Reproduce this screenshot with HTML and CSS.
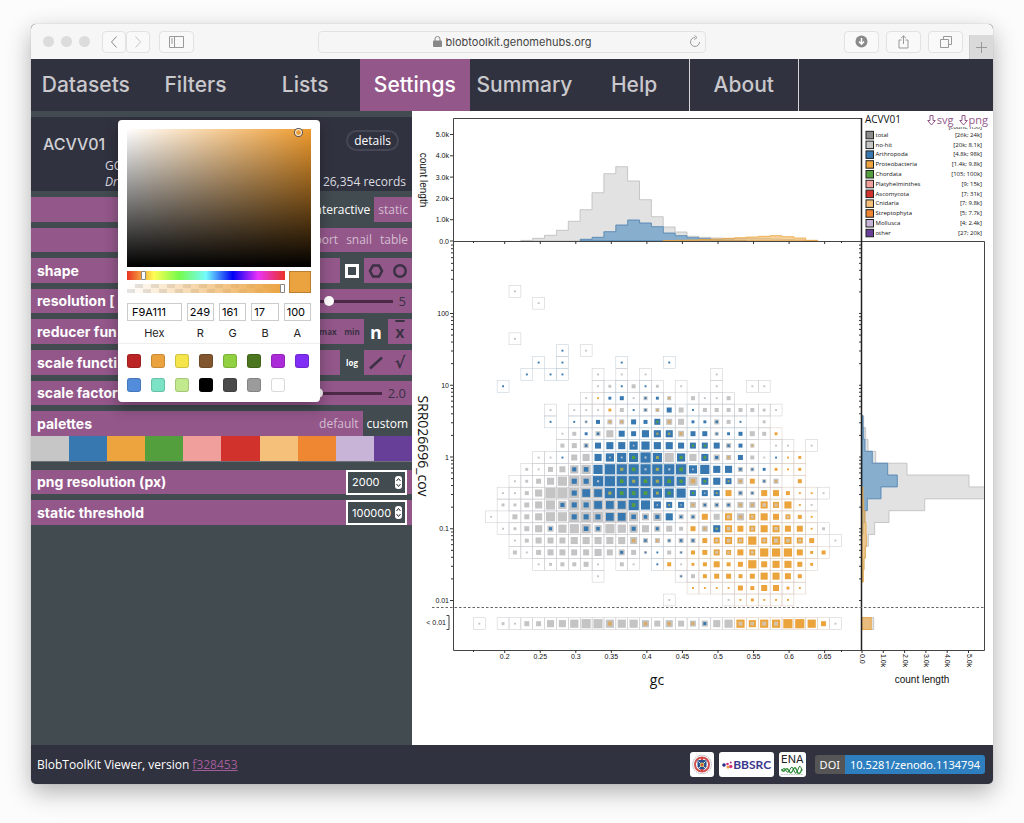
FILE: index.html
```html
<!DOCTYPE html>
<html lang="en">
<head>
<meta charset="utf-8">
<title>BlobToolKit Viewer</title>
<link rel="stylesheet" href="styles.css">
</head>
<body>
<div class="window">
  <header class="toolbar">
    <div class="tools">
      <i class="dot"></i><i class="dot"></i><i class="dot"></i>
      <div class="pair">
        <button class="tool back" aria-label="Back"><svg width="8" height="14" viewBox="0 0 8 14"><path d="M6.500 1.500 1.500 7l5 5.500" stroke="#888"/></svg></button>
        <button class="tool back" aria-label="Forward"><svg width="8" height="14" viewBox="0 0 8 14"><path d="M1.500 1.500 6.500 7l-5 5.500" stroke="#c4c4c4"/></svg></button>
      </div>
      <button class="tool" aria-label="Sidebar"><svg width="15" height="12" viewBox="0 0 15 12"><path d="M.5.5h14v11H.5zM5.500.5v11M2 3h2M2 5h2M2 7h2" stroke="#999"/></svg></button>
    </div>
    <div class="address">
      <svg width="9" height="11" viewBox="0 0 9 11"><rect y="4.500" width="9" height="6.500" rx="1" fill="#888"/><path d="M2 5V3a2.500 2.500 0 0 1 5 0v2" stroke="#888"/></svg>
      <span>blobtoolkit.genomehubs.org</span>
      <button class="reload" aria-label="Reload"><svg width="12" height="13" viewBox="0 0 12 13"><path d="M6 2.500a4.500 4.500 0 1 0 4.500 4.500M5.500.5 8 2.500l-2.500 2" stroke="#999"/></svg></button>
    </div>
    <div class="tools end">
      <button class="tool" aria-label="Downloads"><svg width="13" height="13" viewBox="0 0 13 13"><circle cx="6.500" cy="6.500" r="6" fill="#8a8a8a"/><path d="M6.500 3v6M4 6.500 6.500 9.200 9 6.500" stroke="#fff" stroke-width="1.500"/></svg></button>
      <button class="tool" aria-label="Share"><svg width="11" height="14" viewBox="0 0 11 14"><path d="M3.500 5H1v8h9V5H7.500M5.500 9V1M3 3.200 5.500.8 8 3.200" stroke="#999"/></svg></button>
      <button class="tool" aria-label="Tabs"><svg width="12" height="12" viewBox="0 0 12 12"><path d="M.5 3.500h8v8h-8zM3.500 3.500v-3h8v8h-3" stroke="#999"/></svg></button>
    </div>
    <button class="newtab" aria-label="New tab"><svg width="11" height="11" viewBox="0 0 11 11"><path d="M5.500 0v11M0 5.500h11" stroke="#999"/></svg></button>
  </header>

  <nav class="menu">
    <a href="#datasets">Datasets</a><a href="#filters">Filters</a><a href="#lists">Lists</a><a href="#settings" class="current">Settings</a><a href="#summary">Summary</a><a href="#help">Help</a><a href="#about" class="boxed">About</a>
  </nav>

  <main class="main">
    <aside class="side">
      <section class="dataset">
        <h1>ACVV01</h1>
        <button class="details">details</button>
        <p class="accession">GCA</p>
        <p class="taxon"><em>Drosophila</em><span>26,354 records</span></p>
      </section>

      <div class="row"><div class="opts"><button class="on">interactive</button><button>static</button></div></div>
      <div class="row low"><div class="opts"><button>report</button><button>snail</button><button>table</button></div></div>
      <div class="row"><h2>shape</h2><div class="icons">
        <button class="on" aria-label="Square"><svg width="16" height="16" viewBox="0 0 16 16"><rect x="2.500" y="2.500" width="11" height="11" stroke-width="3"/></svg></button>
        <button aria-label="Hexagon"><svg width="16" height="16" viewBox="0 0 16 16"><path d="M5 2.500h6L14 8l-3 5.500H5L2 8z" stroke-width="2.500"/></svg></button>
        <button aria-label="Circle"><svg width="16" height="16" viewBox="0 0 16 16"><circle cx="8" cy="8" r="5.700" stroke-width="2.500"/></svg></button>
      </div></div>
      <div class="row low"><h2><label for="res">resolution [</label></h2><div class="slide"><input class="range" id="res" type="range" min="0" max="10" value="3"><output>5</output></div></div>
      <div class="row"><h2>reducer fun</h2><div class="icons">
        <button class="word">max</button><button class="word">min</button><button class="on big">n</button><button class="bar">x</button>
      </div></div>
      <div class="row"><h2>scale functi</h2><div class="icons">
        <button class="on word">log</button>
        <button aria-label="Linear"><svg width="16" height="16" viewBox="0 0 16 16"><path d="M2 13.500 14 2.500" stroke-width="2.500"/></svg></button>
        <button class="root">√</button>
      </div></div>
      <div class="row low"><h2><label for="fac">scale factor</label></h2><div class="slide"><input class="range" id="fac" type="range" min="0" max="10" value="3"><output>2.0</output></div></div>
      <div class="row"><h2>palettes</h2><div class="opts"><button>default</button><button class="on">custom</button></div></div>
      <div class="palette" id="palette"></div>
      <div class="row low"><h2><label for="png">png resolution (px)</label></h2><div class="number"><input id="png" type="number" value="2000"><svg width="7" height="13" viewBox="0 0 7 13"><rect width="7" height="13" rx="3" fill="#fff"/><path d="M1.500 5 3.500 2.500 5.500 5M1.500 8l2 2.500L5.500 8" stroke="#333"/></svg></div></div>
      <div class="row"><h2><label for="thr">static threshold</label></h2><div class="number"><input id="thr" type="number" value="100000"><svg width="7" height="13" viewBox="0 0 7 13"><rect width="7" height="13" rx="3" fill="#fff"/><path d="M1.500 5 3.500 2.500 5.500 5M1.500 8l2 2.500L5.500 8" stroke="#333"/></svg></div></div>

      <div class="picker">
        <div class="shade"><i class="spot"></i></div>
        <div class="bars">
          <div class="tracks">
            <input class="hue" type="range" min="0" max="100" value="9" aria-label="Hue">
            <input class="alpha" type="range" min="0" max="100" value="100" aria-label="Alpha">
          </div>
          <div class="chosen"></div>
        </div>
        <div class="fields">
          <label><input value="F9A111">Hex</label><label><input value="249">R</label><label><input value="161">G</label><label><input value="17">B</label><label><input value="100">A</label>
        </div>
        <div class="presets" id="presets"></div>
      </div>
    </aside>

    <section class="plot">
      <div class="export"><a href="#svg"><svg width="9" height="11" viewBox="0 0 9 11"><path d="M3 .5h3v5h2.300L4.500 10 .7 5.500H3z"/></svg>svg</a><a href="#png"><svg width="9" height="11" viewBox="0 0 9 11"><path d="M3 .5h3v5h2.300L4.500 10 .7 5.500H3z"/></svg>png</a></div>
      <svg id="chart" class="chart" viewBox="412 111 581 634" role="img" aria-label="Blob plot of coverage against gc"></svg>
    </section>
  </main>

  <footer class="foot">
    <p>BlobToolKit Viewer, version <a href="#version">f328453</a></p>
    <div class="badges">
      <a class="logo" href="#edinburgh" aria-label="University of Edinburgh"><svg width="24" height="25" viewBox="0 0 24 25"><circle cx="12" cy="12.500" r="9.300" stroke="#8d8f9d" stroke-dasharray="1 1"/><circle cx="12" cy="12.500" r="7" fill="#fff" stroke="#d0504e" stroke-width="2"/><path d="M7.500 8.500 12 7.500l4.500 1v6q-1.500 3-4.500 4-3-1-4.500-4z" fill="#27518f"/><path d="M8.500 9.500l7 7M15.500 9.500l-7 7" stroke="#dfe6f0"/><circle cx="12" cy="12.800" r="2.200" fill="#d9b45b"/><circle cx="12" cy="12.800" r="1" fill="#b33"/><path d="M12 5v3M12 17v3" stroke="#d8413e" stroke-width="2"/></svg></a>
      <a class="logo bbsrc" href="#bbsrc"><svg width="11" height="10" viewBox="0 0 11 10"><circle cx="2" cy="5" r="1.800" fill="#2e2d83"/><circle cx="5.500" cy="4" r="1.300" fill="#d3307f"/><circle cx="6" cy="7" r="1.500" fill="#f39b3b"/><circle cx="8.800" cy="2.500" r="1" fill="#a23a8a"/><circle cx="8.800" cy="6.500" r="1.700" fill="#d3307f"/></svg>BBSRC</a>
      <a class="logo ena" href="#ena">ENA<svg width="22" height="11" viewBox="0 0 22 11"><path d="M.5 3q1.500 4 3.500 1t4 1 4-1 4 1 5-2" stroke="#3a9a3f" stroke-width="1.500"/><path d="M1 4.500q2-4 4 0t4-1 4 1 4-1 4 1" stroke="#2b7a34"/><path d="M0 8.500h22" stroke="#ccc" stroke-dasharray="2 .5"/></svg></a>
      <a class="doi" href="#doi"><span>DOI</span><span>10.5281/zenodo.1134794</span></a>
    </div>
  </footer>
</div>
<script src="chart.js"></script>
</body>
</html>
```
FILE: styles.css
```css
* { box-sizing: border-box; }
body {
  margin: 0;
  min-height: 100vh;
  padding: 24px 31px 39px;
  display: flex;
  background: #fcfcfc;
  font: 12px/16px "Open Sans", "Noto Sans", sans-serif;
  color: #fff;
}
svg { fill: none; display: block; flex: none; }
button { border: 0; padding: 0; background: none; font: inherit; color: inherit; display: flex; align-items: center; justify-content: center; }
h1, h2, p { margin: 0; }

.window {
  flex: 1;
  min-width: 0;
  display: flex;
  flex-direction: column;
  border-radius: 5px;
  background: #31323f;
  box-shadow: 0 0 1px #999, 0 8px 24px rgba(0, 0, 0, .3);
  overflow: hidden;
}

/* browser toolbar */
.toolbar {
  position: relative;
  height: 35px;
  display: grid;
  grid-template-columns: 1fr 388px 1fr;
  align-items: center;
  background: #f6f6f6;
}
.tools { display: flex; align-items: center; gap: 7px; padding-left: 12px; }
.tools.end { justify-content: flex-end; padding-right: 30px; }
.dot { width: 11px; height: 11px; border-radius: 50%; background: #dcdcdc; }
.pair { display: flex; margin: 0 2px 0 5px; }
.tool { width: 35px; height: 22px; border: 1px solid #e2e2e2; border-radius: 4px; background: #f9f9f9; }
.tool.back { width: 24px; }
.address {
  position: relative;
  height: 22px;
  display: flex;
  align-items: center;
  justify-content: center;
  gap: 4px;
  border: 1px solid #e2e2e2;
  border-radius: 4px;
  font: 11px/16px "Inter", sans-serif;
  color: #444;
}
.reload { position: absolute; right: 4px; top: 3px; }
.newtab { position: absolute; right: 0; bottom: 0; width: 24px; height: 24px; background: #dadada; border-left: 1px solid #ccc; }

/* main menu */
.menu { height: 52px; display: flex; }
.menu a {
  flex: 0 0 11.4%;
  display: flex;
  align-items: center;
  justify-content: center;
  font: 500 21px/24px "Inter", sans-serif;
  color: #c9c8cc;
  text-decoration: none;
}
.menu .current { background: #93578a; color: #fff; }
.menu .boxed { border: solid #d5d5d8; border-width: 0 1px; }

.main { flex: 1; display: grid; grid-template-columns: 381fr 581fr; }

/* settings panel */
.side { position: relative; padding-top: 6px; background: #424b50; }
.dataset {
  display: grid;
  grid-template-columns: 1fr auto;
  height: 74px;
  margin-bottom: 6px;
  padding: 13px 6px 14px 12px;
  background: #31323f;
  color: #dcdce0;
}
.dataset h1 { font: 500 16px/28px "Inter", sans-serif; color: #d0d0d4; }
.details { height: 21px; margin-right: 7px; padding: 0 6px; border: 2px solid #454854; border-radius: 11px; color: #fff; }
.accession, .taxon { grid-column: 1 / 3; padding-left: 62px; }
.taxon { display: flex; justify-content: space-between; }
.row {
  display: flex;
  align-items: center;
  height: 25px;
  margin-bottom: 6px;
  padding-left: 6px;
  background: #93578a;
}
.row.low { height: 24px; }
.row h2 { flex: 1; font: 700 14px/16px "Inter", sans-serif; white-space: nowrap; }
.opts, .icons, .slide { display: flex; align-self: stretch; align-items: stretch; margin-left: auto; color: #d5bdd1; }
.opts button { padding: 0 4px; }
.icons { color: #3b3144; }
.icons button { width: 24px; }
.icons svg { stroke: currentColor; }
.opts .on, .icons .on { background: #424b50; color: #fff; }
.icons .word { font: 700 8px/12px "Open Sans", sans-serif; }
.icons .big { font: 700 18px/20px "Open Sans", sans-serif; }
.icons .bar { font: 700 16px/20px "Inter", sans-serif; text-decoration: overline; text-decoration-thickness: 2px; }
.icons .root { font: 700 16px/20px "DejaVu Sans", sans-serif; }
.slide { align-items: center; gap: 6px; padding-right: 6px; color: #3b3144; font-size: 13px; }
.range { appearance: none; width: 94px; height: 12px; margin: 0; background: linear-gradient(#4c2947, #4c2947) center / 100% 3px no-repeat; }
.range::-webkit-slider-thumb { appearance: none; width: 10px; height: 10px; border-radius: 50%; background: #fff; }
.palette { display: flex; height: 26px; margin: -6px 0 8px; border-bottom: 1px solid #6b7176; }
.palette i { flex: 1; }
.number { position: relative; margin-right: 5px; }
.number input {
  appearance: textfield;
  width: 61px;
  height: 25px;
  padding: 0 0 0 4px;
  border: 2px solid #fff;
  background: #424b50;
  color: #fff;
  font: 11px/16px "Inter", sans-serif;
  display: block;
}
.number input::-webkit-inner-spin-button { appearance: none; }
.number svg { position: absolute; right: 5px; top: 6px; }

/* colour picker */
.picker {
  position: absolute;
  left: 87px;
  top: 9px;
  width: 202px;
  padding: 9px 9px 0;
  border-radius: 4px;
  background: #fff;
  box-shadow: 0 6px 14px rgba(0, 0, 0, .3);
  color: #222;
  font: 11px/16px "Inter", sans-serif;
}
.shade {
  position: relative;
  height: 138px;
  background: linear-gradient(to top, #000, transparent), linear-gradient(to right, #fff, #ee9a2d);
}
.spot { position: absolute; right: 9px; top: 0; width: 7px; height: 7px; border: 1px solid #fff; border-radius: 50%; box-shadow: 0 0 0 1px #555; }
.bars { display: flex; gap: 4px; margin-top: 4px; }
.tracks { flex: 1; display: grid; gap: 4px; }
.tracks input { appearance: none; width: 100%; height: 9px; margin: 0; }
.hue { background: linear-gradient(to right, #ea3323, #fffd54 17%, #75fb4c 33%, #73fbfd 50%, #0000f5 67%, #ea33f7 83%, #ea3323); }
.alpha { background: linear-gradient(to right, transparent, #eba33f), repeating-conic-gradient(#e4e4e4 0 25%, #fff 0 50%) 0 0 / 16px 9px; }
.tracks input::-webkit-slider-thumb { appearance: none; width: 5px; height: 9px; border: 1px solid #888; border-radius: 1px; background: #fff; }
.chosen { width: 22px; border: 1px solid #b87d2d; background: #eba33f; }
.fields { display: grid; grid-template-columns: 2fr 1fr 1fr 1fr 1fr; gap: 5px; margin: 10px -9px 0; padding: 0 9px 2px; border-bottom: 1px solid #eee; }
.fields label { display: flex; flex-direction: column; align-items: center; gap: 4px; }
.fields input { width: 100%; height: 18px; padding: 0 2px; border: 1px solid #ccc; font: 11px/14px "Inter", sans-serif; }
.fields label:first-child input { padding-left: 4px; }
.presets { display: flex; flex-wrap: wrap; gap: 10px; margin-right: -9px; padding: 10px 0; }
.presets i { width: 14px; height: 14px; border-radius: 3px; box-shadow: inset 0 0 0 1px rgba(0, 0, 0, .15); }

/* plot */
.plot { position: relative; background: #fff; }
.chart { width: 100%; height: auto; }
.chart text { font-family: "Liberation Sans", Arial, sans-serif; fill: #111; stroke: none; }
.chart .sans { font-family: "Open Sans", "Noto Sans", sans-serif; }
.tick { font-size: 7px; }
.title { font-size: 10px; }
.name { font-size: 14px; }
.key { font-size: 6px; }
.export { position: absolute; right: 5px; top: 1px; display: flex; gap: 5px; }
.export a { display: flex; align-items: center; gap: 1px; color: #93578a; text-decoration: none; font-size: 11px; }
.export svg { stroke: #93578a; }

/* footer */
.foot { height: 39px; display: flex; align-items: center; justify-content: space-between; padding: 0 8px 0 6px; }
.foot p a { color: #a45c9b; }
.badges { display: flex; align-items: center; gap: 5px; }
.badges a { text-decoration: none; }
.logo { height: 25px; border-radius: 3px; background: #fff; display: flex; align-items: center; }
.bbsrc { padding: 0 3px; color: #39388c; font: 700 12px/16px "Lato", sans-serif; }
.ena { flex-direction: column; padding: 0 2px; color: #222; font: 11px/14px "Inter", sans-serif; }
.doi { display: flex; margin-left: 4px; border-radius: 3px; overflow: hidden; color: #fff; font: 11px/19px "Noto Sans", sans-serif; }
.doi span { padding: 0 5px; background: #555; }
.doi span + span { background: #2e7fc0; }
```
FILE: chart.js
```js
const GREY = '#c4c4c4', BLUE = '#3878b0', ORANGE = '#eba43c', GREEN = '#549f3d';
const X0 = 479.3, Y0 = 291.3, STEP = 11.87;
const chart = document.getElementById('chart');
const out = [];
const line = (x1, y1, x2, y2, s = '#333', extra = '') =>
  out.push(`<path d="M${x1} ${y1}L${x2} ${y2}" stroke="${s}" ${extra}/>`);
const text = (x, y, t, cls, anchor = 'start', turn = 0) =>
  out.push(`<text x="${x}" y="${y}" class="${cls}" text-anchor="${anchor}" ${turn ? `transform="rotate(${turn} ${x} ${y})"` : ''}>${t}</text>`);

// Each entry: row, first column, then one token per bin (size + kind); "-" is an empty bin.
const rows = [
  [0, 3, '1g'], [1, 5, '1g'], [4, 3, '1g'], [5, 7, '1b - 1g'],
  [6, 5, '1b - 1b - - - - 1b - - - 1b'],
  [7, 4, '1b - 1b 1b - - 1g - 1g - 1g - - - - - 1g'],
  [8, 2, '1b - - - - - - - 1g 2g 1b 3g 1b 2g - 1g - - 1g - - 1g 1g'],
  [9, 9, '1g 1o 2b 3b 1g 3B 2b 3O - 3g 1g 1g 3g'],
  [10, 6, '1g - 1g 1g 1g 2o 3g 1b 3B 3O 4b 4g 1b 3g 3g 3g 3g 3g 2g 1g'],
  [11, 6, '1b - 1b 2B 3b 4O 4O 4b 3b 5e 5O 5g 2b 2b 4B 3g 1b - 2g'],
  [12, 7, '1g 3g 2b 4B 6g 5b 4b 6b 6y 6y 5O 4b 4b 3B 2b 3b 4g 3g 2o'],
  [13, 7, '3g 4g 4B 5b 6b 6b 7x 7b 6b 6b 5b 5e 5e 5b 4B 3b 3O - 1g 1g - 1g'],
  [14, 5, '1g 1g 1b 5g 6g 6b 7x 8x 8e 9x 8y 8g 7e 6g 6e 5B 4O 4b 3g 1g 1b 1o 2o'],
  [15, 4, '2g 1g 4g 5g 7B 8B 8b 9b 9y 9e 9x 9y 9x 9e 7x 8b 6b 6b 4B 3B 2b 2o 1o 2o'],
  [16, 3, '1g 2g 4g 6g 8g 9B 9B 9x 9b 9e 9y 9e 9y 9e 8e 8O 6e 6b 5y 5O 4o 3B 4O - 3o'],
  [17, 2, '1g 1g 3g 6g 9g 9g 9B 9f 9f 9y 9e 9e 9e 8y 8e 8b 5e 5x 5y 5o 4B 3B 5o 5o 3o 1o 1o 1g'],
  [18, 2, '2g 2g 4g 6g 8g 7B 9B 9B 9f 9f 9f 9e 8b 6x 5y 5x 5O 4B 4B 4B 5O 5O 6G 5G 6o 1o 1g'],
  [19, 1, '1g - 4g 4g 6g 8g 8g 9B 9B 9B 9f 9f 8B 6B 7B 6b 4B 4B 5o 5g 6G 6O 5G 6o 5o 4G 3o 1o'],
  [20, 2, '1g 2g 4g 6g 5B 7g 8g 8B 6B 8g 7g 7B 6g 5B 5g 3g 4o 5O 6y 6G 5o 5G 6o 6G 5o 5o 1o 2g'],
  [21, 3, '1g 3g 5g 5g 5g 6g 6g 6g 6g 6g 6O 4B 4O 3B 4B 4B 4o 5G 6G 5G 7o 5G 7G 6G 5G 4o - 1g'],
  [22, 3, '3g 1g 4g 5g 5g 5g 5g 6g 5g 5B 4g 2B 1b 3g 2B 3o 4o 5G 4G 5o 5G 7o 7o 7o 5o 2o 3o'],
  [23, 5, '1g 2g 3g 3g 4g 1g - 3g 1g - 1b 3o 1g 2o 3o 5o 3o 4o 7o 5o 6o 6o 4o 2o'],
  [24, 10, '1g - - - - - - 2B 3g 3o 4o 4o 3o 4o 6o 6o 5o 3o'],
  [25, 18, '1o 1o 1o 1o 4o 3o 5o 5o 2o 1o'],
  [26, 16, '1g - - - - 1g 1o 2o 1o 1o 1o'],
  [28, 0, '1g - 2g 1g 4g 4g 6g 6g 7g 8g 8g 7O 7g 7g 6O 5g 6O 5g 5O 5B 6g 7g 7G 6G 7G 7G 8o 8o 7o 4o 1g']
];
const kinds = {
  g: [GREY], b: [BLUE], o: [ORANGE],
  B: [GREY, BLUE, .5], f: [GREY, BLUE, .75], O: [GREY, '#d9ab68', .5], G: [ORANGE, '#d4c3a6', .5],
  e: [BLUE, GREEN, .35], y: [BLUE, '#a5ab55', .3], x: [BLUE, '#b6c3cf', .2]
};
const square = (x, y, s, fill) =>
  out.push(`<rect x="${(x - s / 2).toFixed(1)}" y="${(y - s / 2).toFixed(1)}" width="${s.toFixed(1)}" height="${s.toFixed(1)}" fill="${fill}"/>`);

const dots = [];
for (const [r, c0, list] of rows) {
  list.split(' ').forEach((t, i) => {
    if (t === '-') return;
    const x = X0 + (c0 + i) * STEP, y = Y0 + r * STEP, k = kinds[t[1]];
    const edge = k[0] === ORANGE ? '#dccbc0' : k[0] === BLUE ? '#bccbd6' : '#c9c9cf';
    out.push(`<rect x="${x - 5.9}" y="${y - 5.9}" width="11.87" height="11.87" stroke="${edge}" stroke-width=".5"/>`);
    dots.push([x, y, +t[0] * 1.05 + .8, k]);
  });
}
for (const [x, y, s, k] of dots) {
  square(x, y, s, k[0]);
  if (k[1]) square(x, y, Math.max(1.4, s * k[2]), k[1]);
}

// Stepped histograms: first edge, then bin heights
function topHist(start, hs, fill, stroke) {
  let d = `M${start} 241`;
  hs.forEach((h, i) => { d += `V${241 - h}H${(start + (i + 1) * STEP).toFixed(1)}`; });
  out.push(`<path d="${d}V241z" fill="${fill}" fill-opacity=".6" stroke="${stroke}" stroke-width=".8"/>`);
}
topHist(520.8, [.6, 2.7, 5.7, 10.7, 19.7, 31.3, 48.3, 67.3, 74.3, 60, 41.3, 24.3, 14, 9, 4.7, 3.7, 3, 2.5, 2.5, 2.5, 2.5, 2, 1.5, 1, .5], '#cfcfcf', '#bbb');
topHist(580.2, [1.7, 3.7, 9.3, 16, 21, 18, 14.3, 8, 5.3, 3.3, 2.3, 1.3, 1, .6], '#4c8cc2', '#4a7fae');
topHist(663.3, [.5, .7, 1, 1.5, 2, 2.7, 3.3, 4, 4.7, 5.3, 4.3, 3, .7], '#f1b65c', '#eba43c');

function sideHist(start, ws, fill, stroke) {
  let d = `M862 ${start}`;
  ws.forEach((w, i) => { d += `H${862 + w}V${(start + (i + 1) * STEP).toFixed(1)}`; });
  out.push(`<path d="${d}H862z" fill="${fill}" fill-opacity=".6" stroke="${stroke}" stroke-width=".8"/>`);
}
sideHist(415.7, [1.7, 3.7, 6, 13.7, 45, 107, 122.5, 62.7, 27, 12.7, 6.3, 3.3, 2, 1], '#cfcfcf', '#bbb');
sideHist(415.7, [1, 1.7, 3, 10.3, 25.7, 35.3, 19, 5.3, 2.7, 1], '#4c8cc2', '#4a7fae');
sideHist(487, [1, 1.7, 3, 4, 4.3, 3.3, 2, 1.3], '#f1b65c', '#eba43c');
sideHist(617.6, [11.7], '#cfcfcf', '#bbb');
sideHist(617.6, [9.3], '#eba43c', '#eba43c');

// Frames and axes
out.push('<path d="M453.500 118.500H861.500V650.500H453.500zM453.500 241.500H984.500V650.500H861.500" stroke="#444"/>');
line(861.5, 118, 861.5, 651, '#222', 'stroke-width="1.500"');
line(432, 607.5, 984, 607.5, '#666', 'stroke-dasharray="2.500 2"');
for (let i = 0; i < 10; i++) {
  const x = 504.700 + i * 35.550;
  line(x, 650, x, 653);
  line(x, 241, x, 244);
  text(x, 659, String(+(0.2 + i * 0.05).toFixed(2)), 'tick', 'middle');
}
[473.5, 841.5].forEach(x => { line(x, 650, x, 652); line(x, 241, x, 243); });
for (let i = 0; i < 6; i++) {
  const y = 241 - i * 21.300, x = 862 + i * 21.300;
  const label = i ? i + '.0k' : '0.0';
  line(450, y, 453, y);
  text(449, y + 2.5, label, 'tick', 'end');
  line(x, 650, x, 653);
  text(x - 2, 654, label, 'tick', 'start', 90);
}
for (let d = -2; d < 3; d++) {
  for (let m = 1; m < 10; m++) {
    const y = 457 - 71.750 * (d + Math.log10(m));
    if (y < 244) continue;
    line(m === 1 ? 450 : 451, y, 453, y);
    line(859, y, 861, y);
  }
  text(449, 459.5 - 71.750 * d, String(10 ** d), 'tick', 'end');
}
text(446, 625, '&lt; 0.01', 'tick', 'end');
out.push('<path d="M446.500 615.500h2.500v14h-2.500" stroke="#444"/>');
text(420, 180, 'count length', 'title', 'middle', 90);
text(418, 446, 'SRR026696_cov', 'name sans', 'middle', 90);
text(657, 685, 'gc', 'name sans', 'middle');
text(922, 683, 'count length', 'title', 'middle');

// Legend
const legend = [
  ['total', '[26k; 24k]', '#8c8c8c'], ['no-hit', '[20k; 8.1k]', '#c6c6c6'], ['Arthropoda', '[4.8k; 98k]', '#3878b0'],
  ['Proteobacteria', '[1.4k; 9.8k]', '#eda33e'], ['Chordata', '[105; 100k]', '#549f3d'], ['Platyhelminthes', '[9; 15k]', '#f09f9d'],
  ['Ascomycota', '[7; 31k]', '#d1332c'], ['Cnidaria', '[7; 9.8k]', '#f5c07a'], ['Streptophyta', '[5; 7.7k]', '#ef8632'],
  ['Mollusca', '[4; 2.4k]', '#c8b4d6'], ['other', '[27; 20k]', '#673f99']
];
text(865, 123, 'ACVV01', 'title sans');
out.push('<clipPath id="cut"><rect x="940" y="127" width="50" height="6"/></clipPath><g clip-path="url(#cut)">');
text(982, 129, '[count; n50]', 'key sans', 'end');
out.push('</g>');
legend.forEach(([name, stat, fill], i) => {
  const y = 134.800 + i * 9.800;
  out.push(`<rect x="866" y="${y - 3.5}" width="7.500" height="7.500" fill="${fill}" stroke="#222"/>`);
  text(875.5, y + 2, name, 'key sans');
  text(982, y + 2, stat, 'key sans', 'end');
});
chart.innerHTML = out.join('');

const swatches = (id, colours) => {
  document.getElementById(id).innerHTML = colours.map(c => `<i style="background:${c}"></i>`).join('');
};
swatches('palette', legend.slice(1).map(l => l[2]));
swatches('presets', ['#bb2424', '#eba33f', '#f5e54b', '#81562f', '#90d041', '#4b751e', '#ac2bd9', '#802df5', '#538cdb', '#7be2c5', '#c2e98d', '#000', '#4a4a4a', '#9b9b9b', '#fff']);
```
